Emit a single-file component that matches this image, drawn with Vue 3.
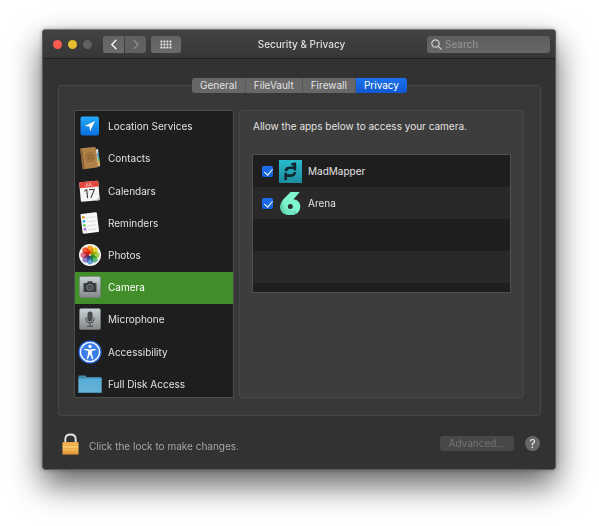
<script setup>
import { ref } from 'vue'

const tabs = ['General', 'FileVault', 'Firewall', 'Privacy']
const activeTab = ref('Privacy')

const services = [
  { id: 'location', name: 'Location Services' },
  { id: 'contacts', name: 'Contacts' },
  { id: 'calendars', name: 'Calendars' },
  { id: 'reminders', name: 'Reminders' },
  { id: 'photos', name: 'Photos' },
  { id: 'camera', name: 'Camera' },
  { id: 'microphone', name: 'Microphone' },
  { id: 'accessibility', name: 'Accessibility' },
  { id: 'disk', name: 'Full Disk Access' }
]
const selected = ref('camera')

const apps = ref([
  { id: 'madmapper', name: 'MadMapper', allowed: true },
  { id: 'arena', name: 'Arena', allowed: true }
])

const petals = [
  { angle: 0, color: '#f9a02c' },
  { angle: 45, color: '#e3d32d' },
  { angle: 90, color: '#a5cf45' },
  { angle: 135, color: '#5fbb86' },
  { angle: 180, color: '#68a4dc' },
  { angle: 225, color: '#9480c4' },
  { angle: 270, color: '#dd7188' },
  { angle: 315, color: '#f0553b' }
]
const reminderDots = ['#f79a2b', '#2fa4f2', '#5ccb4c', '#b06ce0']
const query = ref('')
</script>

<template>
  <main class="window">
    <header class="titlebar">
      <div class="left">
        <div class="lights">
          <button class="light close" aria-label="Close"></button>
          <button class="light minimize" aria-label="Minimize"></button>
          <button class="light zoom" aria-label="Zoom" disabled></button>
        </div>
        <div class="history">
          <button class="tool back" aria-label="Back">
            <svg width="8" height="11" viewBox="0 0 8 11"><path d="M6 1.3 1.8 5.5 6 9.7" fill="none" stroke="#f2f2f2" stroke-width="1.5" stroke-linecap="round" stroke-linejoin="round" /></svg>
          </button>
          <button class="tool forward" aria-label="Forward" disabled>
            <svg width="8" height="11" viewBox="0 0 8 11"><path d="M2 1.3 6.2 5.5 2 9.7" fill="none" stroke="#8c8c8c" stroke-width="1.4" stroke-linecap="round" stroke-linejoin="round" /></svg>
          </button>
        </div>
        <button class="tool all" aria-label="Show All">
          <svg width="12" height="9" viewBox="0 0 12 9" fill="#ededed">
            <template v-for="r in 3" :key="r">
              <rect v-for="c in 4" :key="c" :x="c * 3 - 2.5" :y="r * 3 - 2.5" width="1.9" height="1.9" rx="0.4" />
            </template>
          </svg>
        </button>
      </div>
      <h1>Security &amp; Privacy</h1>
      <label class="search">
        <svg width="11" height="11" viewBox="0 0 11 11" fill="none" stroke="#d2d2d2" stroke-width="1.2" stroke-linecap="round"><circle cx="4.5" cy="4.5" r="3.7" /><path d="m7.3 7.3 2.9 2.9" /></svg>
        <input v-model="query" type="search" placeholder="Search" aria-label="Search" />
      </label>
    </header>

    <div class="content">
      <nav class="tabs">
        <button v-for="tab in tabs" :key="tab" :class="{ active: tab === activeTab }" @click="activeTab = tab">{{ tab }}</button>
      </nav>

      <section class="group">
        <div class="services">
          <ul>
            <li v-for="s in services" :key="s.id">
              <button :class="{ selected: s.id === selected }" @click="selected = s.id">
                <svg v-if="s.id === 'location'" class="icon" viewBox="0 0 24 24">
                  <defs><linearGradient id="loc" x2="0" y2="1"><stop stop-color="#26a9fb" /><stop offset="1" stop-color="#0a6fe0" /></linearGradient></defs>
                  <rect x="2.5" y="2.5" width="18.5" height="19" rx="2" fill="url(#loc)" />
                  <path d="M17 7 12.1 17.2 11.5 12.4 6.7 11.9Z" fill="#fff" />
                </svg>
                <svg v-else-if="s.id === 'contacts'" class="icon" viewBox="0 0 24 24">
                  <path d="M17 3.5 20 3 22 20 18 21Z" fill="#ddd9cd" />
                  <path d="m19 7 1.5-.3.5 4-1.5.3Z" fill="#3d8ed0" /><path d="m19.6 11 1.5-.3.5 4-1.5.3Z" fill="#43b765" /><path d="m20.1 15 1.5-.3.4 4-1.5.3Z" fill="#e9a32c" />
                  <path d="M2.3 3.6Q2.2 2.5 3.3 2.3L16.2 1Q17.5.9 17.7 2L20.1 20.2Q20.2 21.3 19 21.5L5.8 23.2Q4.7 23.3 4.5 22.2Z" fill="#b1814a" />
                  <path d="m2.3 4 2-.2L6.7 23l-1 .2q-1 .1-1.2-1Z" fill="#8c6135" />
                  <circle cx="12" cy="11" r="4.7" fill="#a87a43" stroke="#946a3a" stroke-width=".7" />
                  <circle cx="10.5" cy="9.6" r="1.2" fill="#8a6235" /><circle cx="13.5" cy="9.4" r="1.2" fill="#8a6235" />
                  <path d="M8.9 13.5q0-2.5 1.8-2.5t1.9 2.3q-.1-2.4 1.3-2.5 1.6 0 1.7 2.2Z" fill="#8a6235" />
                </svg>
                <svg v-else-if="s.id === 'calendars'" class="icon" viewBox="0 0 24 24">
                  <g transform="rotate(-5 12 12)">
                    <rect x="2" y="2.5" width="19" height="19.5" rx="1" fill="#f5f5f3" />
                    <path d="M3 2.5h17q1 0 1 1v4.8H2V3.5q0-1 1-1Z" fill="#e4473f" />
                    <text x="11.5" y="7.1" class="month">JUL</text>
                    <text x="11.5" y="18.8" class="day">17</text>
                    <path d="M17 22h3q1 0 1-1v-3Z" fill="#c8c8c8" />
                  </g>
                </svg>
                <svg v-else-if="s.id === 'reminders'" class="icon" viewBox="0 0 24 24">
                  <g transform="rotate(-7 12 12)">
                    <rect x="3.5" y="2" width="16.5" height="20" rx="1.2" fill="#f8f8f8" />
                    <template v-for="(dot, i) in reminderDots" :key="dot">
                      <circle cx="6.2" :cy="5.6 + i * 4" r="1.4" :fill="dot" />
                      <path :d="`M9.5 ${6.5 + i * 4}h8.5`" stroke="#cfcfcf" stroke-width=".7" />
                    </template>
                  </g>
                </svg>
                <svg v-else-if="s.id === 'photos'" class="icon" viewBox="0 0 24 24">
                  <circle cx="12" cy="12" r="11" fill="#f7f7f5" />
                  <g class="petals">
                    <rect v-for="p in petals" :key="p.angle" x="9" y="2.5" width="6" height="8.8" rx="3" :fill="p.color" :transform="`rotate(${p.angle} 12 12)`" />
                  </g>
                </svg>
                <svg v-else-if="s.id === 'camera'" class="icon" viewBox="0 0 24 24">
                  <defs><linearGradient id="metal" x2="0" y2="1"><stop stop-color="#c9d3d6" /><stop offset="1" stop-color="#858889" /></linearGradient></defs>
                  <rect x="1.5" y="1.5" width="21" height="21" rx="1.6" fill="url(#metal)" stroke="#777d7d" stroke-width=".6" />
                  <path d="M6.3 8h2.6l1-1.7h4.2l1 1.7h2.6q.8 0 .8.8v7.4q0 .8-.8.8H6.3q-.8 0-.8-.8V8.8q0-.8.8-.8Z" fill="#3b3e40" />
                  <circle cx="12" cy="12.3" r="2.9" fill="#3b3e40" stroke="#8f9597" stroke-width=".8" /><circle cx="12" cy="12.3" r="1.4" fill="#5a5f62" />
                </svg>
                <svg v-else-if="s.id === 'microphone'" class="icon" viewBox="0 0 24 24">
                  <rect x="1.5" y="1.5" width="21" height="21" rx="1.6" fill="url(#metal)" stroke="#777d7d" stroke-width=".6" />
                  <rect x="9.5" y="4.5" width="5" height="10" rx="2.5" fill="#45484a" />
                  <path d="M8 10.5v2q0 3.5 4 3.5t4-3.5v-2M12 16v3M8.8 19.2h6.4" fill="none" stroke="#45484a" stroke-width="1" />
                </svg>
                <svg v-else-if="s.id === 'accessibility'" class="icon" viewBox="0 0 24 24">
                  <circle cx="12" cy="12" r="11.6" fill="#2d6be0" /><circle cx="12" cy="12" r="9.6" fill="#3c7df0" stroke="#fff" stroke-width="1.4" />
                  <circle cx="12" cy="6.4" r="1.7" fill="#fff" />
                  <path d="M6.5 8.7 12 9.5l5.5-.8.2 1.3-3.8 1v2.8l1.5 5-1.3.4-1.9-4.7h-.4l-1.9 4.7-1.3-.4 1.5-5V11l-3.8-1Z" fill="#fff" />
                </svg>
                <svg v-else class="icon" viewBox="0 0 24 24">
                  <defs><linearGradient id="folder" x2="0" y2="1"><stop stop-color="#56acd8" /><stop offset="1" stop-color="#66b3d6" /></linearGradient></defs>
                  <path d="M.5 4.2q0-.8.8-.8h6l1.5 1.5h13.9q.8 0 .8.8V9H.5Z" fill="#4288a9" />
                  <path d="M.3 6.6h23.4v13.6q0 .8-.8.8H1.1q-.8 0-.8-.8Z" fill="url(#folder)" />
                  <path d="M.5 20.6h23" stroke="#3f84a5" stroke-width=".8" />
                </svg>
                <span>{{ s.name }}</span>
              </button>
            </li>
          </ul>
        </div>

        <div class="panel">
          <p>Allow the apps below to access your camera.</p>
          <ul class="apps">
            <li v-for="app in apps" :key="app.id">
              <label>
                <input v-model="app.allowed" type="checkbox" />
                <svg v-if="app.id === 'madmapper'" width="23" height="23" viewBox="0 0 23 23">
                  <defs><linearGradient id="mad" x2="0" y2="1"><stop stop-color="#2abccb" /><stop offset="1" stop-color="#1c8ba0" /></linearGradient></defs>
                  <rect width="23" height="23" fill="url(#mad)" />
                  <path d="M12.6 4.9Q13.4 3.8 15.9 3.8V10.600M6.700 11A4.600 3.900 0 0 1 11.300 7.700H16M16 12.100A4.600 3.900 0 0 1 11.300 15.600H6.700M6.700 12.800V20" fill="none" stroke="#12262b" stroke-width="2.600" />
                </svg>
                <svg v-else width="23" height="23" viewBox="0 0 23 23">
                  <path d="M11.5 0h9.3L14.5 7.2Q21.3 8.3 21.3 14.6 21.3 23 11.5 23 1.2 23 1.2 14.7q0-3.3 2.8-6.9Z" fill="#7ef5cf" />
                  <path d="M4.2 8Q1.8 16 8.8 18.4 14 20 18.500 20.500 16 23 11.500 23 1.200 23 1.200 14.700q0-3.300 3-6.700Z" fill="#5ed3ae" />
                  <path d="M7 9.500Q4.500 17 11 18.700q3 .5 6.500-.5-1.500 4.500-6 4.800-5.500-.8-7-5.500-1-5 2.500-8Z" fill="#70e5c1" />
                  <circle cx="11.300" cy="14.600" r="2.500" fill="#29302e" />
                </svg>
                <span>{{ app.name }}</span>
              </label>
            </li>
          </ul>
        </div>
      </section>

      <footer>
        <button class="lock">
          <svg width="17" height="22" viewBox="0 0 17 22">
            <defs><linearGradient id="brass" x2="0" y2="1"><stop stop-color="#eaa03c" /><stop offset=".35" stop-color="#fbca6b" /><stop offset="1" stop-color="#e4993b" /></linearGradient></defs>
            <path d="M3.3 10V6.5q0-5 5.2-5t5.2 5V10" fill="none" stroke="#dfe5e8" stroke-width="1.9" />
            <rect x=".5" y="9" width="16" height="12.5" rx=".8" fill="url(#brass)" />
            <path d="M.5 12.5h16M.5 15.5h16M.5 18.5h16" stroke="#dc9639" stroke-width=".5" />
            <path d="M.7 21.2h15.6" stroke="#b26d20" stroke-width=".8" />
          </svg>
          <span>Click the lock to make changes.</span>
        </button>
        <button class="advanced" disabled>Advanced...</button>
        <button class="help" aria-label="Help">?</button>
      </footer>
    </div>
  </main>
</template>

<style>
body {
  background: #fff;
}
</style>

<style scoped>
* {
  box-sizing: border-box;
}
.window {
  margin: 29px 43px 57px 42px;
  border: 1px solid #5c5c5c;
  border-top-color: #777;
  border-radius: 4px;
  background: #323232;
  color: #e2e2e2;
  font: 10px/14px Inter, "Liberation Sans", sans-serif;
  box-shadow: 0 15px 32px rgba(0, 0, 0, 0.62), 0 0 4px rgba(0, 0, 0, 0.3);
}
button,
input {
  margin: 0;
  padding: 0;
  border: 0;
  background: none;
  color: inherit;
  font: inherit;
}
svg {
  display: block;
  flex: none;
}
ul,
p,
h1 {
  margin: 0;
  padding: 0;
  list-style: none;
}
.titlebar {
  display: grid;
  grid-template-columns: 1fr auto 1fr;
  align-items: center;
  height: 29px;
  padding: 0 5px 0 10px;
  border-bottom: 1px solid #1f1f1f;
  border-radius: 3px 3px 0 0;
  background: linear-gradient(#434343, #373737);
}
.titlebar h1 {
  font-size: 10px;
  font-weight: 500;
  color: #dedede;
}
.left,
.lights,
.history {
  display: flex;
  align-items: center;
}
.lights {
  gap: 6px;
  margin-right: 11px;
}
.light {
  width: 9px;
  height: 9px;
  border-radius: 50%;
}
.close {
  background: #fc5b53;
}
.minimize {
  background: #e6bf2e;
}
.zoom {
  background: #606060;
}
.history {
  gap: 1px;
  margin-right: 5px;
}
.tool {
  display: flex;
  align-items: center;
  justify-content: center;
  width: 21px;
  height: 17px;
  border-radius: 3px;
  background: linear-gradient(#636363, #6b6b6b);
}
.back {
  border-radius: 3px 0 0 3px;
}
.forward {
  border-radius: 0 3px 3px 0;
  background: #606060;
}
.all {
  width: 30px;
}
.search {
  display: flex;
  align-items: center;
  justify-self: end;
  gap: 3px;
  width: 123px;
  height: 17px;
  padding: 0 4px;
  border-radius: 3px;
  background: linear-gradient(#5d5d5d, #676767);
}
.search input {
  flex: 1;
  min-width: 0;
  outline: 0;
  appearance: none;
}
.search input::placeholder {
  color: #999;
  opacity: 1;
}
.content {
  padding: 19px 14px 0 15px;
}
.tabs {
  position: relative;
  display: flex;
  justify-content: center;
  margin-bottom: -8px;
}
.tabs button {
  height: 15px;
  padding: 0 8px;
  border-right: 1px solid #585858;
  background: #676767;
  line-height: 15px;
}
.tabs button:first-child {
  border-radius: 3px 0 0 3px;
}
.tabs button:last-child {
  border-right: 0;
  border-radius: 0 3px 3px 0;
}
.tabs .active {
  background: linear-gradient(#1b6ff0, #1159d2);
  color: #fff;
}
.group {
  display: flex;
  gap: 5px;
  padding: 24px 16px 17px 15px;
  border: 1px solid #464646;
  border-radius: 3px;
  background: #383838;
}
.services {
  width: 160px;
  height: 288px;
  overflow: hidden;
  border: 1px solid #4b4b4b;
  background: #1e1e1e;
}
.services ul {
  display: grid;
  grid-template-rows: repeat(9, 1fr);
  height: 290px;
}
.services button {
  display: flex;
  align-items: center;
  gap: 6px;
  width: 100%;
  height: 100%;
  padding: 0 3px 2px;
  text-align: left;
}
.services .selected {
  background: #418e2a;
  color: #fff;
}
.icon {
  width: 24px;
  height: 24px;
}
.month,
.day {
  font-family: Inter, "Liberation Sans", sans-serif;
  text-anchor: middle;
}
.month {
  font-size: 4px;
  fill: #fff;
}
.day {
  font-size: 12px;
  fill: #333;
}
.petals {
  isolation: isolate;
}
.petals rect {
  mix-blend-mode: multiply;
}
.panel {
  flex: 1;
  min-width: 0;
  padding: 8px 12px;
  border: 1px solid #484848;
  border-radius: 3px;
  background: #3d3d3d;
}
.panel p {
  padding: 0 1px;
}
.apps {
  height: 139px;
  margin-top: 21px;
  border: 1px solid #4f4f4f;
  background: repeating-linear-gradient(#1e1e1e 0 32px, #292929 32px 64px);
}
.apps label {
  display: flex;
  align-items: center;
  gap: 6px;
  height: 32px;
  padding: 0 9px;
}
.apps input {
  position: relative;
  width: 11px;
  height: 11px;
  border-radius: 2px;
  background: #565656;
  appearance: none;
}
.apps input:checked {
  background: linear-gradient(#1d6ff0, #1560dc);
}
.apps input:checked::after {
  content: "";
  position: absolute;
  top: 1px;
  left: 4px;
  width: 4px;
  height: 7px;
  border: solid #fff;
  border-width: 0 1px 1px 0;
  transform: rotate(40deg);
}
footer {
  display: flex;
  align-items: center;
  height: 53px;
  padding: 2px 1px 0 4px;
}
.lock {
  display: flex;
  align-items: center;
  gap: 10px;
  margin-right: auto;
  color: #a6a6a6;
}
.lock span {
  padding-top: 4px;
}
.advanced {
  height: 15px;
  padding: 0 9px;
  border-radius: 3px;
  background: #484848;
  color: #747474;
  line-height: 15px;
}
.help {
  width: 15px;
  height: 15px;
  margin-left: 11px;
  border-radius: 50%;
  background: #686868;
  color: #f0f0f0;
  font-size: 12px;
  line-height: 15px;
  text-align: center;
}
</style>
